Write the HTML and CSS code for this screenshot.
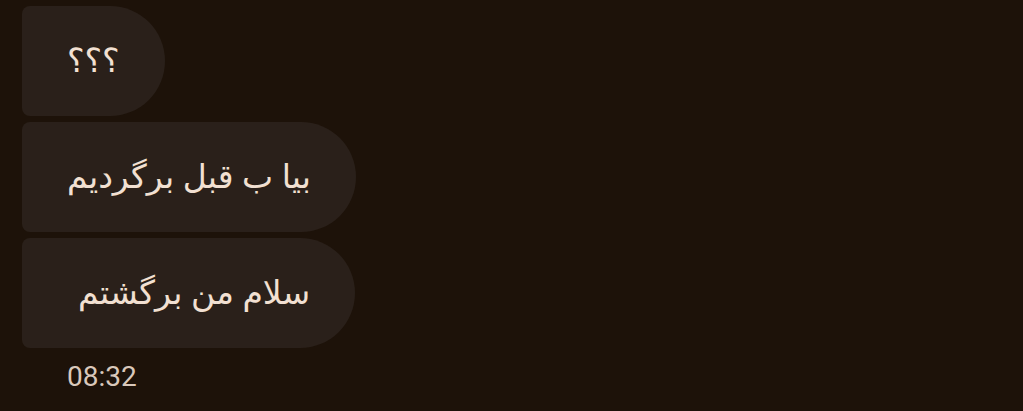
FILE: index.html
```html
<!DOCTYPE html>
<html lang="fa">
<head>
    <meta charset="UTF-8">
    <meta name="viewport" content="width=device-width, initial-scale=1.0">
    <title>گفتگو</title>
    <link rel="stylesheet" href="styles.css">
</head>
<body>
    <div class="chat">
        <div class="grupo">
            <div class="bolha" dir="rtl">؟؟؟</div>
            <div class="bolha" dir="rtl">بیا ب قبل برگردیم</div>
            <div class="bolha larga" dir="rtl">سلام من برگشتم</div>
        </div>
        <div class="hora">08:32</div>
    </div>
</body>
</html>
```

FILE: styles.css
```css
body {
    margin: 0;
    background: #1d1209;
    font-family: "Noto Sans", "DejaVu Sans", sans-serif;
    height: 411px;
    overflow: hidden;
}
.chat {
    padding: 6px 22px 0;
}
.grupo {
    display: flex;
    flex-direction: column;
    align-items: flex-start;
    gap: 6px;
}
.bolha {
    height: 110px;
    box-sizing: border-box;
    display: flex;
    align-items: center;
    padding: 0 45px 4px;
    background: #2a201a;
    color: #f2e0d2;
    font-size: 33px;
    border-radius: 8px 55px 55px 8px;
}
.larga {
    padding-left: 56px;
}
.hora {
    margin: 12px 0 0 45px;
    color: #d9c8bb;
    font-family: Roboto, sans-serif;
    font-size: 28px;
}
```
